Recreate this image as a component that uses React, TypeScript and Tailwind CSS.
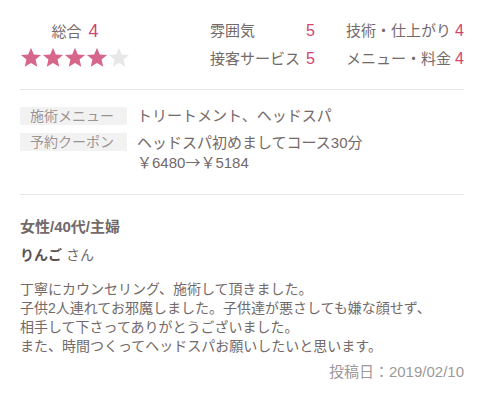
const FONT = { fontFamily: '"Liberation Sans", "Noto Sans CJK JP", "Noto Sans", sans-serif' };

function Star({ on }: { on: boolean }) {
  return (
    <svg width="22" height="21" viewBox="0 0 24 23" className="block">
      <polygon
        points="12,0.8 15.1,8.1 23,8.7 17,13.8 18.9,21.6 12,17.4 5.1,21.6 7,13.8 1,8.7 8.9,8.1"
        fill={on ? "#d6678b" : "#e8e8e8"}
      />
    </svg>
  );
}

const ratings = [
  { label: "雰囲気", value: 5 },
  { label: "技術・仕上がり", value: 4 },
  { label: "接客サービス", value: 5 },
  { label: "メニュー・料金", value: 4 },
];

export default function App() {
  return (
    <div className="w-[485px] h-[400px] bg-white text-[#736969]" style={FONT}>
      <div className="pl-5 pr-[21px]">
        {/* Score summary */}
        <div className="flex pt-[20px] pb-[20px] border-b border-[#e6e6e6]">
          <div className="w-[110px] flex flex-col items-center">
            <div className="h-[22px] flex items-center gap-[7px] text-[15px] leading-none">
              <span>総合</span>
              <span className="text-[#d2436f] text-[18px]">4</span>
            </div>
            <div className="flex mt-[5px]">
              {[0, 1, 2, 3, 4].map((i) => (
                <Star key={i} on={i < 4} />
              ))}
            </div>
          </div>
          <div className="ml-[80px] grid grid-cols-[96px_40px_109px_auto] gap-y-[7px] text-[15px] leading-[21px]">
            {ratings.map((r) => (
              <div key={r.label} className="contents">
                <span>{r.label}</span>
                <span className="text-[#d2436f] text-[16px]">{r.value}</span>
              </div>
            ))}
          </div>
        </div>

        {/* Menu & coupon */}
        <div className="pt-[17px] pb-[22px] border-b border-[#e6e6e6] flex flex-col gap-[8px]">
          <div className="flex items-start gap-[10px]">
            <span className="w-[107px] h-[18px] pl-[10px] bg-[#f3f2f2] text-[14px] leading-[18px] text-[#9b9494] shrink-0">施術メニュー</span>
            <span className="text-[15px] leading-[19px] -mt-[1px]">トリートメント、ヘッドスパ</span>
          </div>
          <div className="flex items-start gap-[10px]">
            <span className="w-[107px] h-[18px] pl-[10px] bg-[#f3f2f2] text-[14px] leading-[18px] text-[#9b9494] shrink-0">予約クーポン</span>
            <div className="text-[15px] leading-[19px]">
              <div>ヘッドスパ初めましてコース30分</div>
              <div>
                ￥6480<span className="font-['Noto_Sans_CJK_JP']">→</span>￥5184
              </div>
            </div>
          </div>
        </div>

        {/* Review */}
        <div className="pt-[22px]">
          <p className="text-[15px] leading-[20px] font-bold">女性/40代/主婦</p>
          <p className="mt-[8px] text-[14px] leading-[20px]">
            <span className="font-bold text-[#5a5050]">りんご</span> さん
          </p>
          <p className="mt-[15px] text-[14px] leading-[19px]">
            丁寧にカウンセリング、施術して頂きました。
            <br />
            子供2人連れてお邪魔しました。子供達が悪さしても嫌な顔せず、
            <br />
            相手して下さってありがとうございました。
            <br />
            また、時間つくってヘッドスパお願いしたいと思います。
          </p>
          <p className="mt-[6px] text-right text-[15px] leading-[20px] text-[#9e9999]">投稿日：2019/02/10</p>
        </div>
      </div>
    </div>
  );
}
